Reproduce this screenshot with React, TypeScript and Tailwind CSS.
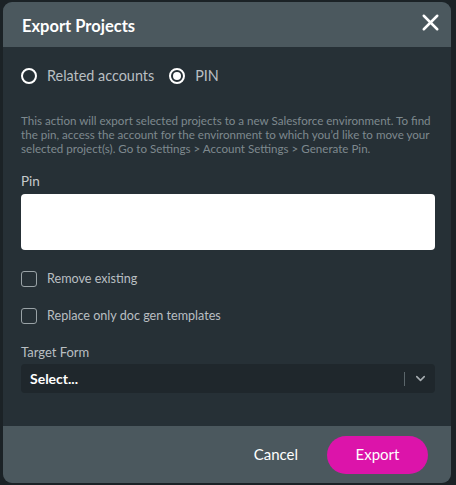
import React, { useState } from 'react';
import { X, ChevronDown } from 'lucide-react';

const App: React.FC = () => {
  const [mode, setMode] = useState<'related' | 'pin'>('pin');
  const [removeExisting, setRemoveExisting] = useState(false);
  const [replaceOnly, setReplaceOnly] = useState(false);

  return (
    <div className="min-h-[485px] w-[456px] bg-[#1b2226] pt-[2px] pl-[3px] font-['Lato',sans-serif]">
      <div className="w-[448px] h-[481px] rounded-[9px] overflow-hidden bg-[#263036] flex flex-col">
        {/* header */}
        <div className="h-[45px] bg-[#4b585e] flex items-center justify-between pl-[19px] pr-[7px]">
          <h2 className="pt-[3px] text-[16.5px] font-bold text-white">Export Projects</h2>
          <button className="-mt-[5px] text-white">
            <X className="h-[27px] w-[27px]" strokeWidth={2.2} />
          </button>
        </div>

        {/* body */}
        <div className="flex-1 pl-[18px] pr-[16px] pt-[21px]">
          <div className="flex items-center h-[16px] text-[14.4px] text-[#b9bfc2]">
            <button className="flex items-center gap-[10px]" onClick={() => setMode('related')}>
              <span className="h-[16px] w-[16px] rounded-full border-2 border-white flex items-center justify-center">
                {mode === 'related' && <span className="h-[8px] w-[8px] rounded-full bg-white" />}
              </span>
              <span>Related accounts</span>
            </button>
            <button className="flex items-center gap-[10px] ml-[15px]" onClick={() => setMode('pin')}>
              <span className="h-[16px] w-[16px] rounded-full border-2 border-white flex items-center justify-center">
                {mode === 'pin' && <span className="h-[8px] w-[8px] rounded-full bg-white" />}
              </span>
              <span>PIN</span>
            </button>
          </div>

          <p className="mt-[30px] text-[11.6px] leading-[14px] text-[#7e898e]">
            This action will export selected projects to a new Salesforce environment. To find the pin, access the account for the environment to which you’d like to move your selected project(s). Go to Settings &gt; Account Settings &gt; Generate Pin.
          </p>

          <label className="block mt-[17px] text-[13.5px] leading-[16px] text-[#c5c9cb]">Pin</label>
          <input type="text" className="mt-[5px] w-full h-[56px] rounded-[4px] bg-white px-3 text-[14px] outline-none" />

          <button className="mt-[21px] flex items-center gap-[10px] h-[16px]" onClick={() => setRemoveExisting(!removeExisting)}>
            <span className="h-[16px] w-[16px] rounded-[3px] border border-[#9aa3a7] flex items-center justify-center text-white text-[11px]">
              {removeExisting && '✓'}
            </span>
            <span className="text-[12.6px] text-[#b9bfc2]">Remove existing</span>
          </button>

          <button className="mt-[21px] flex items-center gap-[10px] h-[16px]" onClick={() => setReplaceOnly(!replaceOnly)}>
            <span className="h-[16px] w-[16px] rounded-[3px] border border-[#9aa3a7] flex items-center justify-center text-white text-[11px]">
              {replaceOnly && '✓'}
            </span>
            <span className="text-[12.6px] text-[#b9bfc2]">Replace only doc gen templates</span>
          </button>

          <label className="block mt-[20px] text-[13px] leading-[16px] text-[#b9bfc2]">Target Form</label>
          <div className="mt-[4px] h-[29px] rounded-[4px] bg-[#1f272c] flex items-center pl-[9px]">
            <span className="flex-1 text-[14px] font-bold text-white">Select...</span>
            <span className="h-[14px] w-px bg-[#5b666b]" />
            <span className="w-[30px] flex items-center justify-center text-[#a6adb1]">
              <ChevronDown className="h-[15px] w-[15px]" strokeWidth={2.5} />
            </span>
          </div>
        </div>

        {/* footer */}
        <div className="h-[57px] bg-[#4b585e] flex items-center justify-end pr-[23px]">
          <button className="text-[15px] text-white mr-[29px]">Cancel</button>
          <button className="h-[38px] w-[101px] rounded-full bg-[#dc14aa] text-[15px] text-white">Export</button>
        </div>
      </div>
    </div>
  );
};

export default App;
